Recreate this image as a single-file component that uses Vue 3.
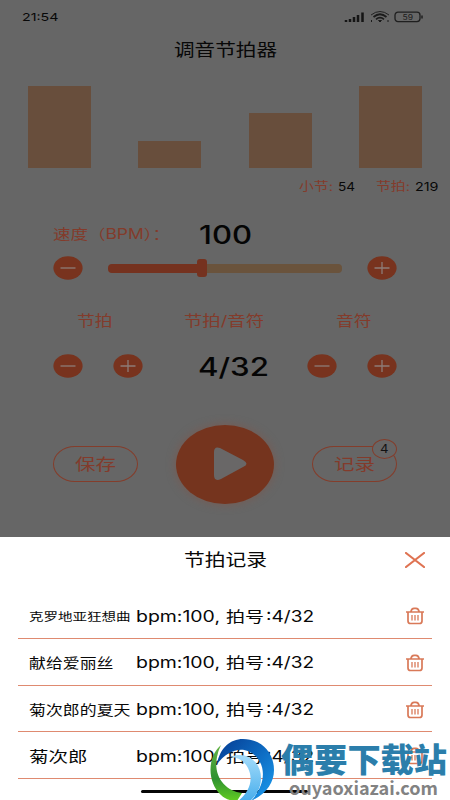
<script setup>
import { h } from 'vue'

// Wide-set label: the text is stretched to exactly w pixels.
const WideText = (props) =>
  h('svg', { class: 'wide', width: props.w, height: props.s + 4 }, [
    h('text', {
      x: 0,
      y: (props.s + 4) / 2 + props.s * 0.365,
      textLength: props.w,
      lengthAdjust: 'spacingAndGlyphs',
      'font-size': props.s
    }, props.t)
  ])
WideText.props = ['w', 's', 't']

const RoundIcon = (props) =>
  h('svg', { width: 30, height: 24, viewBox: '0 0 30 24' }, [
    h('ellipse', { cx: 15, cy: 12, rx: 14.6, ry: 11.7, fill: '#78331e' }),
    h('path', {
      d: props.plus ? 'M7.5 12H22.5M15 6V18' : 'M7.5 12H22.5',
      stroke: '#8d7c77',
      'stroke-width': 1.3
    })
  ])
RoundIcon.props = { plus: Boolean }

const bars = [82, 27, 55, 82]
const records = [
  { name: '克罗地亚狂想曲', w: 101.5, s: 11.5 },
  { name: '献给爱丽丝', w: 84.5, s: 13.3 },
  { name: '菊次郎的夏天', w: 101.5, s: 13.3 },
  { name: '菊次郎', w: 58.5, s: 15 }
]
</script>

<template>
  <main class="screen">
    <header class="status">
      <WideText :w="36.5" :s="11" t="21:54" />
      <div class="status-icons">
        <svg width="22" height="12" viewBox="0 0 22 12">
          <path d="M2 9V11M6 8V11M10 6V11M14 4V11M18.5 1.5V11" stroke="#151515" stroke-width="2.5" />
        </svg>
        <svg width="20" height="12" viewBox="0 0 20 12" fill="none" stroke="#1b1b1b">
          <path d="M1 4Q10-3 19 4" stroke-width=".9" />
          <path d="M3.5 6Q10 .5 16.5 6M6 8.3Q10 5 14 8.3" stroke-width="1.7" />
          <path d="M8.5 9.5H11.5L10 11ZM1.5 9V11M18 9V11" stroke-width="1" />
        </svg>
        <svg width="30" height="12" viewBox="0 0 30 12">
          <rect x="1" y="1.2" width="25" height="9.4" rx="3" fill="none" stroke="#1f1f1f" stroke-width="1.3" />
          <path d="M28 4.5V7.5" stroke="#1f1f1f" stroke-width="1.5" />
          <text x="8.5" y="8.7" textLength="10.5" lengthAdjust="spacingAndGlyphs" font-size="7.5" fill="#1c1c1c">59</text>
        </svg>
      </div>
    </header>

    <h1 class="title"><WideText :w="103" :s="17" t="调音节拍器" /></h1>

    <section class="bars">
      <div v-for="(b, i) in bars" :key="i" class="bar" :style="{ height: b + 'px' }"></div>
    </section>

    <section class="counts">
      <WideText class="accent" :w="34" :s="12.3" t="小节:" />
      <WideText class="first-count" :w="17" :s="12.3" t="54" />
      <WideText class="accent" :w="34" :s="12.3" t="节拍:" />
      <WideText :w="23.5" :s="12.3" t="219" />
    </section>

    <section class="speed">
      <WideText class="accent" :w="117" :s="14" t="速度（BPM）：" />
      <WideText class="strong" :w="53" :s="25" t="100" />
    </section>

    <section class="slider-row">
      <RoundIcon />
      <div class="track">
        <div class="filled"></div>
        <div class="thumb"></div>
        <div class="rest"></div>
      </div>
      <RoundIcon plus />
    </section>

    <section class="labels accent">
      <WideText :w="35.5" :s="14.3" t="节拍" />
      <WideText :w="80" :s="14.3" t="节拍/音符" />
      <WideText :w="35.5" :s="14.3" t="音符" />
    </section>

    <section class="controls">
      <RoundIcon />
      <RoundIcon plus />
      <WideText class="strong" :w="71" :s="25" t="4/32" />
      <RoundIcon />
      <RoundIcon plus />
    </section>

    <section class="actions">
      <div class="pill"><WideText :w="41" :s="16" t="保存" /></div>
      <div class="play">
        <svg width="34" height="36" viewBox="0 0 34 36">
          <path d="M1 6Q1 0 7 2L30 14Q37 18 30 21L8 33Q1 36 1 29Z" fill="#696767" />
        </svg>
      </div>
      <div class="pill">
        <WideText :w="41" :s="16" t="记录" />
        <div class="badge"><WideText :w="8.5" :s="11.5" t="4" /></div>
      </div>
    </section>

    <section class="sheet">
      <div class="sheet-head">
        <WideText :w="83" :s="16.5" t="节拍记录" />
        <svg class="close" width="20" height="16" viewBox="0 0 20 16">
          <path d="M1 1L19 15M19 1L1 15" stroke="#df7352" stroke-width="2.2" stroke-linecap="round" />
        </svg>
      </div>
      <div v-for="r in records" :key="r.name" class="record">
        <div class="name"><WideText :w="r.w" :s="r.s" :t="r.name" /></div>
        <WideText :w="84" :s="15.6" t="bpm:100," />
        <WideText class="beat" :w="38" :s="15.3" t="拍号" />
        <WideText :w="48" :s="15.6" t=":4/32" />
        <svg class="trash" width="20" height="18" viewBox="0 0 20 18" fill="none" stroke="#d97958" stroke-width="1.7">
          <path d="M1 5H19M5.8 5Q6.5 1.3 9 1.3H11Q13.5 1.3 14.2 5M3 5V14Q3 16.5 5.5 16.5H14.5Q17 16.5 17 14V5" />
          <path d="M7 8V13.5M10 8V13.5M13 8V13.5" stroke-width="1.3" />
        </svg>
      </div>
      <div class="home"></div>
    </section>

    <aside class="brand">
      <svg class="brand-logo" width="66" height="62" viewBox="210 738 66 62">
        <defs>
          <linearGradient id="blue" x1="0" y1="0" x2="1" y2="1">
            <stop offset="0" stop-color="#063b91" />
            <stop offset=".45" stop-color="#0c66bd" />
            <stop offset="1" stop-color="#1c9df0" />
          </linearGradient>
          <linearGradient id="sky" x1="0" y1="0" x2="0" y2="1">
            <stop offset="0" stop-color="#a5dcfa" />
            <stop offset="1" stop-color="#48aeec" />
          </linearGradient>
          <linearGradient id="green" x1="0" y1="0" x2="0" y2="1">
            <stop offset="0" stop-color="#64b345" />
            <stop offset=".6" stop-color="#2f9130" />
            <stop offset="1" stop-color="#61cc22" />
          </linearGradient>
        </defs>
        <path d="M221 745C207 757 207 782 221 795C225 799 231 801 237 801L242 793C225 791 213 776 217 757Q218 751 221 745Z" fill="url(#green)" />
        <path d="M217 764C220 748 230 739 243 739C261 739 274 752 274 770C274 783 266 794 251 801C263 788 267 771 258 759C247 744 229 748 217 764Z" fill="url(#blue)" />
        <path d="M230 757C247 750 261 762 261 778C261 787 257 795 250 801H238C249 793 254 780 248 768Q242 757 230 757Z" fill="url(#sky)" />
      </svg>
      <div class="brand-text">
        <WideText class="brand-name" :w="166" :s="32.5" t="偶要下载站" />
        <WideText class="brand-url" :w="149" :s="18" t="ouyaoxiazai.com" />
      </div>
    </aside>
  </main>
</template>

<style>
body { margin: 0; background: #666; overflow: hidden; }
</style>

<style scoped>
.screen {
  position: relative;
  width: 450px;
  height: 800px;
  overflow: hidden;
  background: #666;
  color: #080808;
  fill: #080808;
  font-family: Inter, "Noto Sans CJK SC", sans-serif;
}
svg { display: block; flex: none; }
.wide { display: block; flex: none; overflow: visible; }
.accent { fill: #833b2b; }
.strong { font-weight: 500; fill: #050505; }
.status {
  display: flex;
  height: 33px;
  align-items: center;
  justify-content: space-between;
  padding: 0 26px 0 21.5px;
  box-sizing: border-box;
}
.status-icons { display: flex; gap: 4px; }
.title { display: flex; height: 34px; margin: 0; padding-bottom: 1px; box-sizing: border-box; align-items: center; justify-content: center; font-weight: 400; }
.bars { display: flex; height: 101px; padding: 0 28px; align-items: flex-end; justify-content: space-between; }
.bar { width: 63px; background: #684e3c; }
.counts { display: flex; height: 36px; padding-left: 299px; align-items: center; gap: 4.5px; }
.first-count { margin-right: 17px; }
.speed { display: grid; height: 42px; padding: 9px 0 0 53px; grid-template-columns: 146px 53px; align-items: center; }
.slider-row { display: flex; height: 26px; padding: 0 53px; align-items: center; justify-content: space-between; }
.track { display: flex; width: 234px; align-items: center; }
.filled { width: 89px; height: 9px; border-radius: 4px 0 0 4px; background: #75321f; }
.thumb { width: 10px; height: 18px; border-radius: 3px; background: #75321f; }
.rest { flex: 1; height: 9px; border-radius: 0 4px 4px 0; background: #6a533c; }
.labels { display: flex; height: 34px; padding: 23px 79px 0 77px; align-items: center; justify-content: space-between; }
.controls { display: grid; height: 56px; padding-left: 53px; grid-template-columns: 60px 85px 109px 60px 30px; align-items: center; }
.actions { display: flex; height: 140px; padding: 0 53px; align-items: center; justify-content: space-between; }
.pill {
  position: relative;
  display: flex;
  width: 85px;
  height: 36px;
  box-sizing: border-box;
  align-items: center;
  justify-content: center;
  border: 1px solid #843d2b;
  border-radius: 22px / 18px;
  fill: #833b2b;
}
.badge {
  position: absolute;
  top: -8px;
  right: -1px;
  display: flex;
  width: 25px;
  height: 20px;
  box-sizing: border-box;
  align-items: center;
  justify-content: center;
  border: 1px solid #843d2b;
  border-radius: 50%;
  background: #676666;
  fill: #111;
}
.play {
  display: flex;
  width: 98px;
  height: 79px;
  box-sizing: border-box;
  padding-left: 9px;
  align-items: center;
  justify-content: center;
  border-radius: 50%;
  background: #75341e;
  box-shadow: 0 0 10px #795a51;
}
.sheet { height: 263px; margin-top: 3px; background: #fff; }
.sheet-head { display: grid; height: 55.3px; grid-template-columns: 184px 221px 20px; align-items: center; box-sizing: border-box; padding-bottom: 9px; }
.sheet-head .wide { grid-column: 2; }
.record {
  display: flex;
  height: 46.7px;
  margin: 0 18px;
  padding: 2.5px 0 0 11px;
  align-items: center;
  box-sizing: border-box;
  border-bottom: 1.4px solid #df8a70;
}
.name { width: 106.5px; flex: none; }
.beat { margin: 0 2px 0 6px; }
.trash { margin-left: auto; margin-right: 7px; }
.home { width: 167px; height: 3px; margin: 11px 0 0 141px; border-radius: 2px; background: #060606; }
.brand { position: absolute; left: 210px; top: 738px; display: flex; width: 240px; height: 62px; gap: 5px; }
.brand-text { display: flex; flex-direction: column; padding-top: 4px; }
.brand-name { font-weight: 900; fill: #2b7eab; }
.brand-url { margin: -2px 0 0 8px; font-family: "Noto Sans CJK SC", sans-serif; font-weight: 700; fill: #828282; }
</style>
